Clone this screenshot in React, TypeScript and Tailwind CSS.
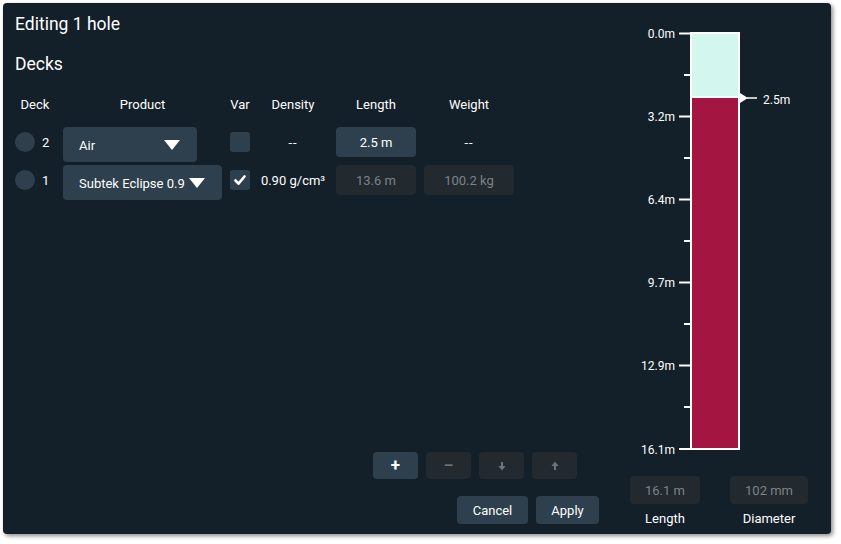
import React from "react";

interface Deck {
  id: number;
  product: string;
  selectWidth: string;
  variable: boolean;
  density: string;
  length: string;
  weight: string;
  editable: boolean;
}

const decks: Deck[] = [
  {
    id: 2,
    product: "Air",
    selectWidth: "w-[134px]",
    variable: false,
    density: "--",
    length: "2.5 m",
    weight: "--",
    editable: true,
  },
  {
    id: 1,
    product: "Subtek Eclipse 0.9",
    selectWidth: "w-[159px]",
    variable: true,
    density: "0.90 g/cm³",
    length: "13.6 m",
    weight: "100.2 kg",
    editable: false,
  },
];

const majors = [
  { y: 33.5, label: "0.0m" },
  { y: 116.5, label: "3.2m" },
  { y: 199.5, label: "6.4m" },
  { y: 282.5, label: "9.7m" },
  { y: 365.5, label: "12.9m" },
  { y: 449, label: "16.1m" },
];
const minors = [75, 158, 241, 324, 407];

const Triangle = () => (
  <svg width="16" height="10" viewBox="0 0 16 10">
    <polygon points="0,0 16,0 8,10" fill="#ffffff" />
  </svg>
);

const Check = () => (
  <svg width="20" height="20" viewBox="0 0 20 20">
    <path
      d="M5.5 10.5l3 3.2L14.5 6.5"
      fill="none"
      stroke="#ffffff"
      strokeWidth="2.6"
      strokeLinecap="round"
      strokeLinejoin="round"
    />
  </svg>
);

const Arrow = ({ up }: { up?: boolean }) => (
  <svg width="8" height="10" viewBox="0 0 8 10" className={up ? "rotate-180" : ""}>
    <path d="M4 1v5" stroke="#6c7479" strokeWidth="2" />
    <polygon points="0.5,5 7.5,5 4,9.5" fill="#6c7479" />
  </svg>
);

const HoleChart = () => (
  <svg width="220" height="445" viewBox="611 20 220 445">
    <rect x="691" y="33" width="48" height="64" fill="#d3f7ef" />
    <rect x="691" y="97" width="48" height="352" fill="#a51541" />
    <rect x="691" y="33" width="48" height="416" fill="none" stroke="#ffffff" strokeWidth="2" />
    <line x1="691" y1="97" x2="739" y2="97" stroke="#ffffff" strokeWidth="2" />
    {majors.map((m) => (
      <g key={m.label}>
        <line x1="679" y1={m.y} x2="691" y2={m.y} stroke="#ffffff" strokeWidth="2" />
        <text
          x="675"
          y={m.y + 4.5}
          textAnchor="end"
          fill="#ffffff"
          fontSize="12"
          fontFamily="Roboto, sans-serif"
        >
          {m.label}
        </text>
      </g>
    ))}
    {minors.map((y) => (
      <line key={y} x1="684" y1={y} x2="691" y2={y} stroke="#ffffff" strokeWidth="2" />
    ))}
    <polygon points="740,93 748,98 740,103" fill="#ffffff" />
    <line x1="747" y1="98" x2="757" y2="98" stroke="#ffffff" strokeWidth="1.5" />
    <text x="763" y="103.5" fill="#ffffff" fontSize="12" fontFamily="Roboto, sans-serif">
      2.5m
    </text>
  </svg>
);

export default function App() {
  return (
    <div className="w-[841px] h-[544px] bg-white p-[3px] font-['Roboto',sans-serif]">
      <div className="w-[828px] h-[531px] bg-[#131f29] rounded-[4px] shadow-[2px_2px_4px_rgba(0,0,0,0.45)] flex text-white">
        {/* left: deck table */}
        <div className="w-[608px] flex flex-col pl-[12px] pt-[9px] pb-[10px]">
          <h1 className="text-[17.5px] leading-6">Editing 1 hole</h1>
          <h2 className="text-[17.5px] leading-6 mt-[16px]">Decks</h2>

          <div className="grid grid-cols-[40px_159px_20px_70px_80px_90px] gap-x-2 mt-[21px] text-[13px] leading-4">
            <span className="text-center">Deck</span>
            <span className="text-center">Product</span>
            <span className="text-center">Var</span>
            <span className="text-center">Density</span>
            <span className="text-center">Length</span>
            <span className="text-center">Weight</span>
          </div>

          <div className="flex flex-col gap-[3px] mt-[14px] text-[13px]">
            {decks.map((d) => (
              <div
                key={d.id}
                className="grid grid-cols-[40px_159px_20px_70px_80px_90px] gap-x-2 items-start h-[35px]"
              >
                <div className="flex items-center h-[30px]">
                  <span className="w-5 h-5 rounded-full bg-[#2e404e]" />
                  <span className="ml-[7px] pt-[2px]">{d.id}</span>
                </div>
                <div
                  className={`${d.selectWidth} h-[35px] rounded-[4px] bg-[#2e404e] flex items-center justify-between pl-4 pr-[17px]`}
                >
                  <span className="pt-[2px]">{d.product}</span>
                  <Triangle />
                </div>
                <div className="h-[30px] flex items-center">
                  <span className="w-5 h-5 rounded-[3px] bg-[#2e404e] flex items-center justify-center">
                    {d.variable && <Check />}
                  </span>
                </div>
                <div
                  className={`h-[30px] flex items-center justify-center whitespace-nowrap pt-[2px] ${
                    d.editable ? "tracking-[1px]" : ""
                  }`}
                >
                  {d.density}
                </div>
                <div
                  className={`h-[30px] rounded-[4px] flex items-center justify-center pt-[2px] ${
                    d.editable ? "bg-[#2e404e] text-white" : "bg-[#22292f] text-[#7d8388]"
                  }`}
                >
                  {d.length}
                </div>
                {d.editable ? (
                  <div className="h-[30px] flex items-center justify-center pt-[2px] tracking-[1px]">
                    {d.weight}
                  </div>
                ) : (
                  <div className="h-[30px] rounded-[4px] bg-[#22292f] text-[#7d8388] flex items-center justify-center pt-[2px]">
                    {d.weight}
                  </div>
                )}
              </div>
            ))}
          </div>

          <div className="flex-1" />

          <div className="flex justify-end gap-2 mr-[34px]">
            <button className="w-[45px] h-[27px] rounded-[4px] bg-[#2e404e] text-white text-[17px] font-bold leading-none flex items-center justify-center">
              +
            </button>
            <button className="w-[45px] h-[27px] rounded-[4px] bg-[#22292f] text-[#6c7479] text-[15px] font-bold leading-none flex items-center justify-center">
              –
            </button>
            <button className="w-[45px] h-[27px] rounded-[4px] bg-[#22292f] flex items-center justify-center">
              <Arrow />
            </button>
            <button className="w-[45px] h-[27px] rounded-[4px] bg-[#22292f] flex items-center justify-center">
              <Arrow up />
            </button>
          </div>

          <div className="flex justify-end gap-2 mr-[12px] mt-[17px] text-[13px]">
            <button className="w-[71px] h-[28px] rounded-[4px] bg-[#2e404e] pt-[2px]">Cancel</button>
            <button className="w-[63px] h-[28px] rounded-[4px] bg-[#2e404e] pt-[2px]">Apply</button>
          </div>
        </div>

        {/* right: hole column */}
        <div className="flex-1 flex flex-col pt-[17px]">
          <HoleChart />
          <div className="flex gap-[30px] ml-[19px] mt-[11px] text-[13px]">
            <div className="flex flex-col items-center w-[70px]">
              <div className="w-full h-[28px] rounded-[4px] bg-[#22292f] text-[#7d8388] flex items-center justify-center pt-[2px]">
                16.1 m
              </div>
              <span className="mt-[7px] leading-4">Length</span>
            </div>
            <div className="flex flex-col items-center w-[78px]">
              <div className="w-full h-[28px] rounded-[4px] bg-[#22292f] text-[#7d8388] flex items-center justify-center pt-[2px]">
                102 mm
              </div>
              <span className="mt-[7px] leading-4">Diameter</span>
            </div>
          </div>
        </div>
      </div>
    </div>
  );
}
